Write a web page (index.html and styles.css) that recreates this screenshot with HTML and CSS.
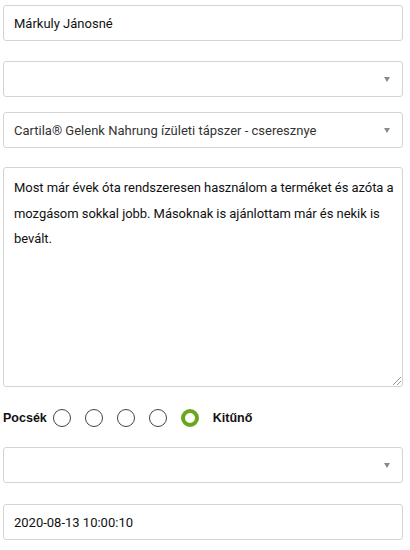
FILE: index.html
```html
<!DOCTYPE html>
<html lang="hu">
<head>
<meta charset="utf-8">
<link rel="stylesheet" href="styles.css">
</head>
<body>
<form class="form">
  <div class="field f-name">Márkuly Jánosné</div>
  <div class="field select f-sel1"><span class="value"></span><span class="arrow"></span></div>
  <div class="field select f-sel2"><span class="value">Cartila® Gelenk Nahrung ízületi tápszer - cseresznye</span><span class="arrow"></span></div>
  <div class="field textarea">Most már évek óta rendszeresen használom a terméket és azóta a mozgásom sokkal jobb. Másoknak is ajánlottam már és nekik is bevált.<span class="grip"></span></div>
  <div class="rating">
    <span class="label">Pocsék</span>
    <span class="radio"></span>
    <span class="radio"></span>
    <span class="radio"></span>
    <span class="radio"></span>
    <span class="radio checked"></span>
    <span class="label label-end">Kitűnő</span>
  </div>
  <div class="field select f-sel3"><span class="value"></span><span class="arrow"></span></div>
  <div class="field f-date">2020-08-13 10:00:10</div>
</form>
</body>
</html>
```
FILE: styles.css
```css
html, body {
  margin: 0;
  padding: 0;
  background: #fff;
}
body {
  font-family: Roboto, "Liberation Sans", Arial, sans-serif;
  font-size: 13px;
  color: #222;
}
.form {
  display: flex;
  flex-direction: column;
  padding: 5px 7px 0 3px;
}
.field {
  box-sizing: border-box;
  width: 400px;
  height: 36px;
  border: 1px solid #d4d4d4;
  border-radius: 3px;
  padding: 0 10px;
  display: flex;
  align-items: center;
  background: #fff;
}
.f-name { color: #111; }
.f-sel1 { margin-top: 20px; }
.f-sel2 { margin-top: 15px; color: #333; }
.select { justify-content: space-between; }
.arrow {
  width: 0;
  height: 0;
  border-left: 3.5px solid transparent;
  border-right: 3.5px solid transparent;
  border-top: 5px solid #8a8a8a;
  margin-right: 2px;
}
.textarea {
  position: relative;
  margin-top: 19px;
  height: 220px;
  align-items: flex-start;
  padding: 7px 4px 7px 10px;
  line-height: 25.5px;
  letter-spacing: -0.05px;
  color: #111;
}
.grip {
  position: absolute;
  right: 1px;
  bottom: 1px;
  width: 8px;
  height: 8px;
  background:
    linear-gradient(135deg, transparent 45%, #999 45%, #999 55%, transparent 55%) no-repeat,
    linear-gradient(135deg, transparent 45%, #999 45%, #999 55%, transparent 55%) no-repeat;
  background-size: 8px 8px, 4px 4px;
  background-position: 0 0, 4px 4px;
}
.rating {
  display: flex;
  align-items: center;
  height: 24px;
  margin-top: 19px;
  font-family: "Liberation Sans", Arial, sans-serif;
  font-weight: bold;
  font-size: 12.5px;
  color: #111;
}
.label { margin-right: 6px; }
.radio {
  box-sizing: border-box;
  width: 18px;
  height: 18px;
  border: 1px solid #444;
  border-radius: 50%;
  margin-right: 14px;
  background: #fff;
}
.radio.checked {
  border: 4px solid #6aa71e;
}
.label-end { margin-left: 0; }
.f-sel3 { margin-top: 17px; }
.f-date { margin-top: 21px; color: #111; }
```
